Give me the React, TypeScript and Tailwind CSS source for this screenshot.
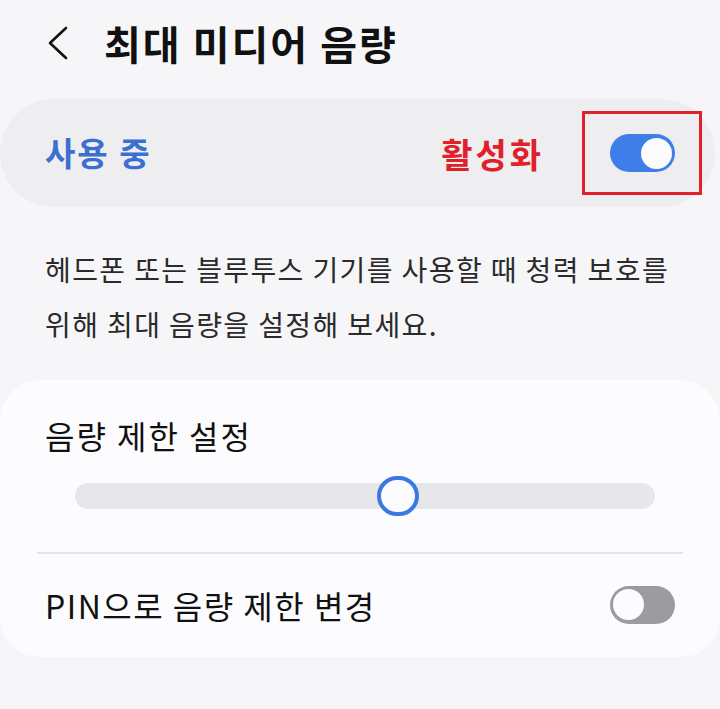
import * as React from "react";

const font = { fontFamily: '"Noto Sans CJK KR", "Noto Sans", sans-serif' };

function Toggle({ on }: { on: boolean }) {
  return (
    <div
      className={
        "flex h-[38px] w-[65px] items-center rounded-full px-[3px] " +
        (on ? "justify-end bg-[#3f7ee8]" : "justify-start bg-[#9b9ba0]")
      }
    >
      <div className="h-[31px] w-[31px] rounded-full bg-[#fcfcfe]" />
    </div>
  );
}

export default function App() {
  const volume = 0.557;

  return (
    <div className="h-[709px] w-[720px] overflow-hidden bg-[#f6f6f8] text-black" style={font}>
      {/* 헤더 */}
      <div className="flex h-[86px] items-center pl-[45px]">
        <svg width="24" height="36" viewBox="0 0 24 36" className="mr-[35px]">
          <polyline points="21,3 5,18 21,33" fill="none" stroke="#111" strokeWidth="2.6" strokeLinecap="round" strokeLinejoin="round" />
        </svg>
        <h1 className="text-[40px] font-bold leading-none tracking-[2px] text-[#111]">최대 미디어 음량</h1>
      </div>

      {/* 사용 중 카드 */}
      <div className="mr-[5px] mt-[13px] flex h-[108px] items-center rounded-[54px] bg-[#eeeef1] pl-[45px]">
        <span className="text-[33px] font-bold tracking-[2px] text-[#3b70d0]">사용 중</span>
        <span className="ml-auto mr-[38px] text-[34px] font-bold tracking-[3px] text-[#e0202a]">활성화</span>
        <div className="mr-[13px] flex h-[84px] w-[120px] items-center justify-center border-[3.5px] border-[#e0202a]">
          <Toggle on />
        </div>
      </div>

      {/* 설명 */}
      <p className="mt-[35px] pl-[45px] pr-[20px] text-[28px] leading-[55px] tracking-[1.4px] text-[#2a2a2a]">
        헤드폰 또는 블루투스 기기를 사용할 때 청력 보호를
        <br />
        위해 최대 음량을 설정해 보세요.
      </p>

      {/* 음량 제한 카드 */}
      <div className="mt-[28px] flex h-[277px] flex-col rounded-[40px] bg-[#fcfcfe]">
        <div className="flex h-[40px] items-center pl-[45px] mt-[35px]">
          <span className="text-[32px] leading-none tracking-[2px] text-[#111]">음량 제한 설정</span>
        </div>
        <div className="mt-[21px] flex h-[40px] items-center pl-[75px] pr-[65px]">
          <div className="relative h-[26px] w-full rounded-full bg-[#e7e7ea]">
            <div
              className="absolute top-1/2 h-[40px] w-[42px] -translate-x-1/2 -translate-y-1/2 rounded-full border-[4px] border-[#3b78e0] bg-[#fcfcfe]"
              style={{ left: `${volume * 100}%` }}
            />
          </div>
        </div>
        <div className="mx-[37px] mt-[36px] h-[2px] bg-[#e4e4e7]" />
        <div className="flex flex-1 items-center pb-[2px] pl-[45px] pr-[45px]">
          <span className="text-[32px] tracking-[1.5px] text-[#111]">PIN으로 음량 제한 변경</span>
          <div className="ml-auto">
            <Toggle on={false} />
          </div>
        </div>
      </div>
    </div>
  );
}
